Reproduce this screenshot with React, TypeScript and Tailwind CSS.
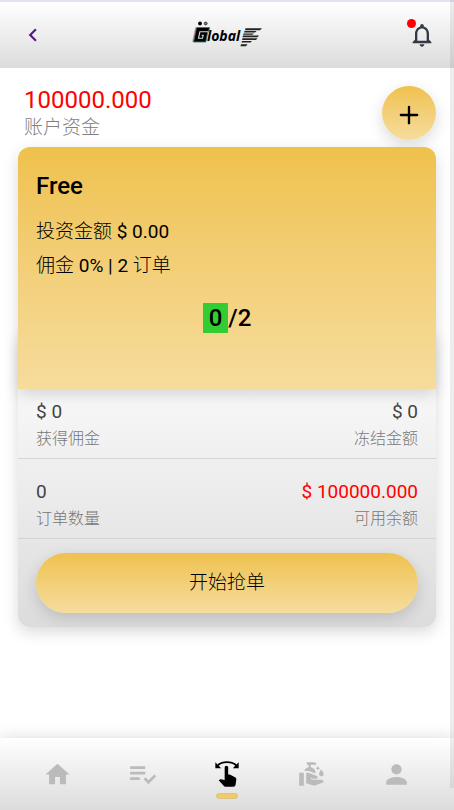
import React from 'react'
import { Plus } from 'lucide-react'
import { MdChevronLeft, MdCleanHands, MdHome, MdNotificationsNone, MdPerson, MdPlaylistAddCheck, MdSwipe } from 'react-icons/md'

const menu = [
    { label: '首页', icon: MdHome, size: 29, active: false },
    { label: '订单', icon: MdPlaylistAddCheck, size: 33, active: false },
    { label: '抢单', icon: MdSwipe, size: 28, active: true },
    { label: '服务', icon: MdCleanHands, size: 28, active: false },
    { label: '我的', icon: MdPerson, size: 31, active: false },
]

const stats = [
    [
        { label: '获得佣金', value: '$ 0', red: false },
        { label: '冻结金额', value: '$ 0', red: false },
    ],
    [
        { label: '订单数量', value: '0', red: false },
        { label: '可用余额', value: '$ 100000.000', red: true },
    ],
]

function Logo() {
    return (
        <svg width="72" height="28" viewBox="0 0 72 28" role="img" aria-label="Global">
            <circle cx="9" cy="2.500" r="1.900" fill="#000" />
            <circle cx="14.700" cy="2.500" r="1.400" fill="#888" stroke="#222" strokeWidth="0.900" />
            <path d="M5 6.500L1.800 21" stroke="#e09a9a" strokeWidth="1.500" />
            <path d="M5.500 6.500H18.500L17.700 10.700H16.800L14.800 21H2.500Z" fill="#000" stroke="#3d7474" strokeWidth="0.900" />
            <path d="M17.500 10.800H8.900L7.500 17.300H11.500L12.200 14.300H10.500" fill="none" stroke="#cfdcdc" strokeWidth="1.100" />
            <text x="16" y="20" fontFamily="'Open Sans', sans-serif" fontSize="14" fontWeight="700" fontStyle="italic" fill="#000">lobal</text>
            <g fill="#222">
                <path d="M54.500 7.300H71L69 9.200H54Z" />
                <path d="M53.500 10H65.500L64 11.600H53Z" />
                <path d="M52.500 12.400H63L61.500 13.800H52Z" />
                <path d="M52 14.600H68L66.500 16.200H51.500Z" />
                <path d="M51.500 17.300H66.500L65 19.100H51Z" />
                <path d="M51 20H61L59.500 21.600H50.500Z" />
                <path d="M50 23.300H56.500L55 25.200H49.500Z" />
            </g>
        </svg>
    )
}

function Header() {
    return (
        <header className="flex h-[68px] items-center justify-between border-t-2 border-[#e1e6ee] bg-linear-to-b from-white to-[#dcdcdc] pr-[18px] pl-5">
            <a href="#back" aria-label="返回" className="text-[#551a8b]">
                <MdChevronLeft size={26} />
            </a>
            <Logo />
            <button type="button" aria-label="通知" className="relative text-[#333a45]">
                <MdNotificationsNone size={28} />
                <span className="absolute -top-0.5 -left-px size-[9px] rounded-full bg-[#f00]" />
            </button>
        </header>
    )
}

export default function App() {
    return (
        <div className="flex min-h-screen flex-col bg-white font-['Roboto','Noto_Sans_CJK_SC',sans-serif] text-black">
            <Header />

            <main className="flex-1 px-[18px] pt-[17px] pb-10">
                <div className="mb-2 flex items-center justify-between pl-[6px]">
                    <div>
                        <p className="text-2xl leading-[30px] text-[#f00]">100000.000</p>
                        <p className="text-[19px] leading-[26px] font-light text-[#808080]">账户资金</p>
                    </div>
                    <button type="button" aria-label="充值" className="flex size-[54px] items-center justify-center rounded-full bg-linear-to-b from-[#efc14c] to-[#f6dc9c] pt-1 shadow-[0_5px_15px_rgba(0,0,0,0.15)]">
                        <Plus size={28} strokeWidth={2} />
                    </button>
                </div>

                <section className="relative z-10 -mt-[2px] h-[242px] rounded-t-xl bg-linear-to-b from-[#efc14c] to-[#f6dc9c] px-[18px] pt-6 shadow-[0_5px_15px_rgba(0,0,0,0.15)]">
                    <h2 className="mb-[14px] text-2xl leading-[30px] font-medium">Free</h2>
                    <p className="text-[19px] leading-[34px]"><span className="font-light">投资金额</span> $ 0.00</p>
                    <p className="text-[19px] leading-[34px]"><span className="font-light">佣金</span> 0% | 2 <span className="font-light">订单</span></p>
                    <p className="mt-5 text-center text-2xl leading-[30px] font-medium">
                        <span className="inline-block bg-[#32cd32] px-[6px]">0</span>/2
                    </p>
                </section>

                <section className="-mt-[60px] rounded-xl bg-linear-to-b from-white to-[#dcdcdc] pt-[60px] pb-[14px] shadow-[0_5px_15px_rgba(0,0,0,0.15)]">
                    {stats.map((row, i) => (
                        <dl key={i} className="flex h-[80px] items-end justify-between border-b border-[#d4d4d4] px-[18px] pb-[6px] first:h-[70px]">
                            {row.map((item) => (
                                <div key={item.label} className="flex flex-col-reverse last:text-right">
                                    <dt className="text-base leading-[26px] font-light text-[#777]">{item.label}</dt>
                                    <dd className={item.red ? 'text-[19px] leading-[28px] text-[#f00]' : 'text-[19px] leading-[28px] text-[#444]'}>{item.value}</dd>
                                </div>
                            ))}
                        </dl>
                    ))}
                    <div className="px-[18px] pt-[14px]">
                        <button type="button" className="h-[60px] w-full rounded-full bg-linear-to-b from-[#efc14c] to-[#f6dc9c] text-[19px] font-light shadow-[0_5px_15px_rgba(0,0,0,0.15)]">
                            开始抢单
                        </button>
                    </div>
                </section>
            </main>

            <nav className="sticky bottom-0 z-20 grid h-[72px] grid-cols-5 items-center justify-items-center bg-linear-to-b from-white to-[#dcdcdc] px-[15px] shadow-[0_0_15px_rgba(0,0,0,0.15)]">
                {menu.map(({ label, icon: Icon, size, active }) => (
                    <a key={label} href="#menu" aria-label={label} className={active ? 'relative text-black' : 'relative text-[#bbb]'}>
                        <Icon size={size} />
                        {active && <span className="absolute top-full left-1/2 mt-[5px] h-[6px] w-[22px] -translate-x-1/2 rounded-full border border-[#d9c48e] bg-[#f3cb64]" />}
                    </a>
                ))}
            </nav>

            {/* scroll thumb */}
            <div className="pointer-events-none fixed top-0 right-0 z-30 h-[788px] w-1 bg-black/7" />
        </div>
    )
}
